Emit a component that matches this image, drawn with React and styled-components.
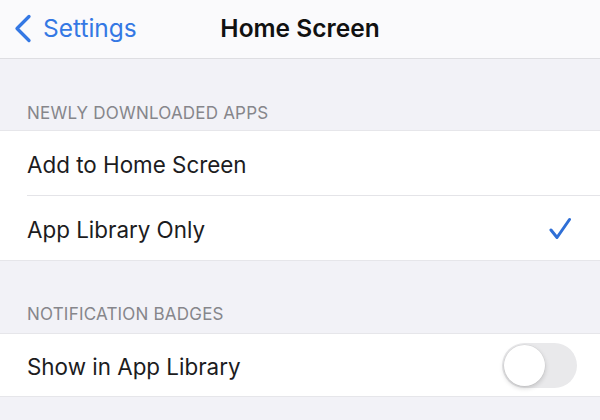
import React, { useState } from "react";
import styled, { createGlobalStyle } from "styled-components";

const Global = createGlobalStyle`
  html, body { margin: 0; padding: 0; }
  body {
    background: #f2f2f7;
    font-family: Inter, "Liberation Sans", Arial, sans-serif;
    -webkit-font-smoothing: antialiased;
  }
`;

const Page = styled.div`
  width: 600px;
  height: 420px;
  overflow: hidden;
  background: #f2f2f7;
  display: flex;
  flex-direction: column;
`;

const NavBar = styled.header`
  height: 58px;
  flex-shrink: 0;
  background: #fafafc;
  border-bottom: 1px solid #dedee2;
  display: grid;
  grid-template-columns: 1fr auto 1fr;
  align-items: center;
`;

const BackButton = styled.button`
  justify-self: start;
  display: flex;
  align-items: center;
  gap: 11px;
  padding: 0 0 2px 14px;
  border: 0;
  background: none;
  color: #3478e4;
  font: 400 24.5px Inter, "Liberation Sans", Arial, sans-serif;
  cursor: pointer;
`;

const Title = styled.h1`
  margin: 0 0 2px;
  font: 600 24.5px Inter, "Liberation Sans", Arial, sans-serif;
  color: #111;
`;

const SectionHeader = styled.div`
  padding: ${(p) => p.$top}px 27px ${(p) => p.$bottom}px;
  font-size: 17px;
  letter-spacing: 0.2px;
  color: #86868b;
  text-transform: uppercase;
`;

const Group = styled.section`
  background: #fff;
  border-top: 1px solid #e6e6ea;
  border-bottom: 1px solid #e6e6ea;
`;

const Row = styled.div`
  height: ${(p) => p.$h}px;
  margin-left: 27px;
  padding-right: 23px;
  display: flex;
  align-items: center;
  justify-content: space-between;
  font-size: 22.4px;
  color: #1c1c1e;
  & + & {
    border-top: 1px solid #e4e4e8;
  }
`;

const Label = styled.span`
  padding-top: 2px;
`;

const CheckMark = styled.svg`
  margin-right: 6px;
`;

const Toggle = styled.button`
  position: relative;
  width: 75px;
  height: 45px;
  border: 0;
  padding: 0;
  border-radius: 23px;
  background: ${(p) => (p.$on ? "#34c759" : "#e9e9eb")};
  cursor: pointer;
  &::after {
    content: "";
    position: absolute;
    top: 2px;
    left: ${(p) => (p.$on ? "32px" : "2px")};
    width: 41px;
    height: 41px;
    border-radius: 50%;
    background: #fff;
    box-shadow: 0 2px 5px rgba(0, 0, 0, 0.18), 0 0 0 0.5px rgba(0, 0, 0, 0.06);
  }
`;

const Chevron = () => (
  <svg width="18" height="29" viewBox="0 0 18 29">
    <path d="M15 2.5 L3 14.5 L15 26.5" fill="none" stroke="currentColor" strokeWidth="3.3" strokeLinecap="round" strokeLinejoin="round" />
  </svg>
);

const Check = () => (
  <CheckMark width="22" height="23" viewBox="0 0 22 23">
    <path d="M2 13 L8 20.5 L20.5 2.5" fill="none" stroke="#2f6fd6" strokeWidth="3" strokeLinecap="round" strokeLinejoin="round" />
  </CheckMark>
);

export default function App() {
  const [choice, setChoice] = useState("library");
  const [badges, setBadges] = useState(false);
  return (
    <Page>
      <Global />
      <NavBar>
        <BackButton>
          <Chevron />
          Settings
        </BackButton>
        <Title>Home Screen</Title>
        <span />
      </NavBar>

      <SectionHeader $top={44} $bottom={7}>Newly Downloaded Apps</SectionHeader>
      <Group>
        <Row $h={64} onClick={() => setChoice("home")}>
          <Label>Add to Home Screen</Label>
          {choice === "home" && <Check />}
        </Row>
        <Row $h={64} onClick={() => setChoice("library")}>
          <Label>App Library Only</Label>
          {choice === "library" && <Check />}
        </Row>
      </Group>

      <SectionHeader $top={43} $bottom={9}>Notification Badges</SectionHeader>
      <Group>
        <Row $h={62}>
          <Label>Show in App Library</Label>
          <Toggle $on={badges} onClick={() => setBadges(!badges)} aria-label="Show in App Library" />
        </Row>
      </Group>
    </Page>
  );
}
